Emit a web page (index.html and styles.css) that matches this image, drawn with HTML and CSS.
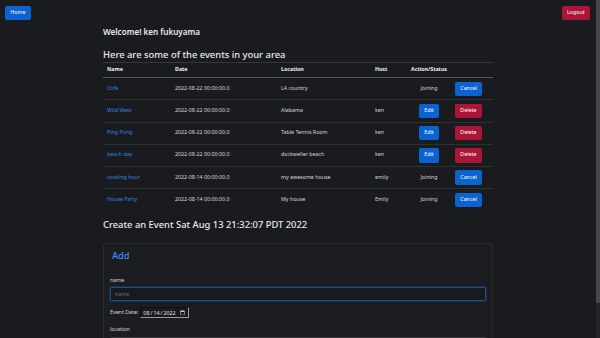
FILE: index.html
```html
<!DOCTYPE html>
<html lang="en">
<head>
    <meta charset="UTF-8">
    <meta name="viewport" content="width=device-width, initial-scale=1.0">
    <title>Events</title>
    <link rel="stylesheet" href="styles.css">
</head>
<body>

    <div class="topbar">
        <button class="btn btn-primary">Home</button>
        <button class="btn btn-danger">Logout</button>
    </div>

    <div class="container">
        <h3 class="welcome">Welcome! ken fukuyama</h3>

        <h2>Here are some of the events in your area</h2>
        <table class="events">
            <colgroup>
                <col class="c-name">
                <col class="c-date">
                <col class="c-loc">
                <col class="c-host">
                <col class="c-status">
                <col class="c-action">
            </colgroup>
            <thead>
                <tr>
                    <th>Name</th>
                    <th>Date</th>
                    <th>Location</th>
                    <th>Host</th>
                    <th colspan="2">Action/Status</th>
                </tr>
            </thead>
            <tbody>
                <tr>
                    <td><a href="#">Cofe</a></td>
                    <td>2022-08-22 00:00:00.0</td>
                    <td>LA country</td>
                    <td></td>
                    <td class="status">Joining</td>
                    <td><button class="btn btn-primary">Cancel</button></td>
                </tr>
                <tr>
                    <td><a href="#">Wild West</a></td>
                    <td>2022-08-22 00:00:00.0</td>
                    <td>Alabama</td>
                    <td>ken</td>
                    <td class="status"><button class="btn btn-primary">Edit</button></td>
                    <td><button class="btn btn-danger">Delete</button></td>
                </tr>
                <tr>
                    <td><a href="#">Ping Pong</a></td>
                    <td>2022-08-22 00:00:00.0</td>
                    <td>Table Tennis Room</td>
                    <td>ken</td>
                    <td class="status"><button class="btn btn-primary">Edit</button></td>
                    <td><button class="btn btn-danger">Delete</button></td>
                </tr>
                <tr>
                    <td><a href="#">beach day</a></td>
                    <td>2022-08-22 00:00:00.0</td>
                    <td>dockweller beach</td>
                    <td>ken</td>
                    <td class="status"><button class="btn btn-primary">Edit</button></td>
                    <td><button class="btn btn-danger">Delete</button></td>
                </tr>
                <tr>
                    <td><a href="#">cooking hour</a></td>
                    <td>2022-08-14 00:00:00.0</td>
                    <td>my awesome house</td>
                    <td>emily</td>
                    <td class="status">Joining</td>
                    <td><button class="btn btn-primary">Cancel</button></td>
                </tr>
                <tr>
                    <td><a href="#">House Party</a></td>
                    <td>2022-08-14 00:00:00.0</td>
                    <td>My house</td>
                    <td>Emily</td>
                    <td class="status">Joining</td>
                    <td><button class="btn btn-primary">Cancel</button></td>
                </tr>
            </tbody>
        </table>

        <h2 class="create">Create an Event Sat Aug 13 21:32:07 PDT 2022</h2>

        <div class="card">
            <h3 class="card-title">Add</h3>
            <form>
                <label for="name">name</label>
                <input type="text" id="name" class="form-control focused" placeholder="name">

                <div class="date-row">
                    <label for="event-date">Event Date:</label>
                    <input type="date" id="event-date" class="date-input" value="2022-08-14">
                </div>

                <label for="location">location</label>
                <input type="text" id="location" class="form-control" placeholder="location">

                <label for="description">description</label>
                <input type="text" id="description" class="form-control" placeholder="description">

                <button type="submit" class="btn btn-primary">Submit</button>
            </form>
        </div>
    </div>

    <!-- the window's scrollbar, as it shows in the capture -->
    <div class="scrollbar"><div class="scrollbar-thumb"></div></div>

</body>
</html>
```

FILE: styles.css
```css
body {
    font-family: "Noto Sans", "Open Sans", sans-serif;
    font-size: 5.3px;
    line-height: 1.5;
    margin: 0;
    padding: 0 4px 0 0;
    background-color: #1a1b1e;
    color: #d6d8db;
}

.scrollbar {
    position: fixed;
    top: 0;
    right: 0;
    width: 4px;
    height: 100%;
    background-color: #232427;
}

.scrollbar-thumb {
    height: 303px;
    background-color: #46474a;
}

.topbar {
    display: flex;
    justify-content: space-between;
    padding: 6px 6px 0 5px;
}

.btn {
    font-family: inherit;
    font-size: 5.3px;
    line-height: 1.5;
    padding: 2.2px 4.3px;
    border: 0.4px solid transparent;
    border-radius: 1.4px;
    color: #fff;
    cursor: pointer;
}

.btn-primary {
    background-color: #0b63cf;
    border-color: #0b63cf;
}

.btn-danger {
    background-color: #ab1637;
    border-color: #ab1637;
}

.container {
    width: 390px;
    margin: 0 auto;
}

h2, h3 {
    font-weight: 500;
    color: #e9eaec;
    line-height: 1.2;
}

.welcome {
    font-size: 8.1px;
    font-weight: 600;
    margin: 7px 0 0;
}

h2 {
    font-size: 9.4px;
    margin: 11.5px 0 2px;
}

.events {
    width: 100%;
    border-collapse: collapse;
    table-layout: fixed;
    border-top: 1px solid #35373b;
}

.c-name { width: 68px; }
.c-date { width: 106px; }
.c-loc { width: 94px; }
.c-host { width: 36px; }
.c-status { width: 44px; }
.c-action { width: 42px; }

.events thead tr {
    height: 15.5px;
}

.events th {
    text-align: left;
    font-weight: 700;
    color: #f1f2f3;
    padding: 0 4px;
    border-bottom: 1px solid #55585c;
}

.events tbody tr {
    height: 22.2px;
    border-bottom: 1px solid #2e3034;
}

.events tbody tr:last-child {
    border-bottom: none;
}

.events td {
    padding: 0 4px;
    vertical-align: middle;
}

.events td.status {
    text-align: center;
}

.events a {
    color: #3585e0;
    text-decoration: none;
}

.create {
    margin: 8.5px 0 12px;
}

.card {
    border: 1px solid #27292c;
    border-radius: 2px;
    background-color: #1c1d20;
    padding: 2px 6px 10px;
}

.card-title {
    font-size: 9.3px;
    color: #3d8bfd;
    margin: 4px 2px 16px;
}

.card label {
    display: block;
    margin-bottom: 2.5px;
}

.form-control {
    display: block;
    box-sizing: border-box;
    width: 100%;
    height: 14px;
    font-family: inherit;
    font-size: 5.3px;
    padding: 0 4px;
    margin-bottom: 6px;
    color: #d6d8db;
    background-color: #191a1d;
    border: 0.6px solid #3a3c40;
    border-radius: 1.4px;
}

.form-control::placeholder {
    color: #6c7075;
}

.form-control.focused {
    border-color: #1e4f88;
    box-shadow: 0 0 0 1px rgba(13, 110, 253, 0.2);
}

.date-row {
    display: flex;
    align-items: center;
    gap: 2px;
    margin-bottom: 8px;
}

.date-row label {
    display: inline;
    margin: 0;
}

.date-input {
    width: 49px;
    height: 11px;
    box-sizing: border-box;
    font-family: inherit;
    font-size: 5.3px;
    padding: 0 1px;
    color: #e2e3e5;
    background-color: #1a1b1e;
    border: 1px solid;
    border-color: #0e0f11 #9a9b9d #9a9b9d #0e0f11;
    color-scheme: dark;
}
```
